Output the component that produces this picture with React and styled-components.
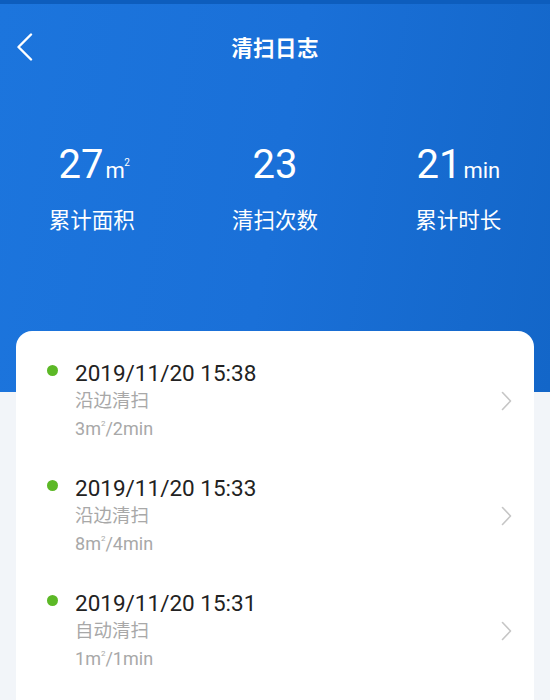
import React from 'react'
import styled, {createGlobalStyle} from 'styled-components'

const GlobalStyle = createGlobalStyle`
  html, body {
    margin: 0;
    padding: 0;
    overflow: hidden;
    background: #f2f5f9;
  }
  body {
    font-family: Roboto, "Noto Sans CJK SC", sans-serif;
  }
`

const STATS = [
  {value: '27', unit: 'm', sup: '2', label: '累计面积'},
  {value: '23', unit: '', label: '清扫次数'},
  {value: '21', unit: 'min', label: '累计时长'}
]

const LOGS = [
  {time: '2019/11/20 15:38', mode: '沿边清扫', area: 3, minutes: 2},
  {time: '2019/11/20 15:33', mode: '沿边清扫', area: 8, minutes: 4},
  {time: '2019/11/20 15:31', mode: '自动清扫', area: 1, minutes: 1}
]

export default function App() {
  return (
    <Page>
      <GlobalStyle />
      <Header>
        <StatusStrip />
        <NavBar>
          <BackButton aria-label="back">
            <svg width="18" height="28" viewBox="0 0 18 28">
              <polyline points="15,1.5 2.5,14 15,26.5" fill="none" stroke="#fff" strokeWidth="2.4" strokeLinecap="round" strokeLinejoin="round" />
            </svg>
          </BackButton>
          <Title>清扫日志</Title>
        </NavBar>
        <Stats>
          {STATS.map(s =>
            <Stat key={s.label}>
              <StatValue>
                {s.value}
                {s.unit && <Unit>{s.unit}{s.sup && <Sup>{s.sup}</Sup>}</Unit>}
              </StatValue>
              <StatLabel>{s.label}</StatLabel>
            </Stat>
          )}
        </Stats>
      </Header>

      <Card>
        {LOGS.map(log =>
          <LogItem key={log.time}>
            <Dot />
            <LogText>
              <LogTime>{log.time}</LogTime>
              <LogMode>{log.mode}</LogMode>
              <LogMeta>{log.area}m<SmallSup>2</SmallSup>/{log.minutes}min</LogMeta>
            </LogText>
            <Chevron width="11" height="20" viewBox="0 0 11 20">
              <polyline points="1.5,1.5 9.5,10 1.5,18.5" fill="none" stroke="#c6c6c6" strokeWidth="1.6" strokeLinecap="round" strokeLinejoin="round" />
            </Chevron>
          </LogItem>
        )}
      </Card>
    </Page>
  )
}

const Page = styled.div`
  width: 550px;
  height: 700px;
  overflow: hidden;
  background: #f2f5f9;
`

const Header = styled.header`
  height: 392px;
  background: linear-gradient(100deg, #1c75dd 0%, #1a70d8 50%, #1366c8 100%);
  color: #fff;
  display: flex;
  flex-direction: column;
`

const StatusStrip = styled.div`
  height: 4px;
  background: #0d5dbd;
`

const NavBar = styled.div`
  height: 84px;
  display: flex;
  align-items: center;
  justify-content: center;
  position: relative;
`

const BackButton = styled.div`
  position: absolute;
  left: 16px;
  top: 29px;
  display: flex;
`

const Title = styled.h1`
  margin: 0;
  font-size: 21.5px;
  font-weight: 700;
  letter-spacing: 0.4px;
`

const Stats = styled.div`
  display: grid;
  grid-template-columns: repeat(3, 1fr);
  margin-top: 52px;
`

const Stat = styled.div`
  display: flex;
  flex-direction: column;
  align-items: center;
`

const StatValue = styled.div`
  font-size: 40px;
  line-height: 50px;
  height: 50px;
  font-weight: 400;
  display: flex;
  align-items: baseline;
`

const Unit = styled.span`
  font-size: 22px;
  line-height: 22px;
  margin-left: 2px;
  position: relative;
`

const Sup = styled.span`
  font-size: 10px;
  line-height: 10px;
  position: absolute;
  top: -2px;
  right: -5px;
`

const StatLabel = styled.div`
  font-size: 21.5px;
  line-height: 30px;
  margin-top: 16px;
`

const Card = styled.section`
  margin: -61px 16px 0;
  min-height: 420px;
  background: #fff;
  border-radius: 16px;
  padding-top: 12px;
`

const LogItem = styled.div`
  display: flex;
  align-items: center;
  padding: 16px 22px 16px 31px;
  height: 83px;
`

const Dot = styled.span`
  width: 11px;
  height: 11px;
  border-radius: 50%;
  background: #5cb826;
  align-self: flex-start;
  margin-top: 6px;
  flex-shrink: 0;
`

const LogText = styled.div`
  flex: 1;
  margin-left: 17px;
  display: flex;
  flex-direction: column;
`

const LogTime = styled.div`
  font-size: 22.5px;
  line-height: 28px;
  color: #222;
`

const LogMode = styled.div`
  font-size: 18.5px;
  line-height: 28px;
  color: #a8a8a8;
`

const LogMeta = styled.div`
  font-size: 18px;
  line-height: 27px;
  color: #a8a8a8;
`

const SmallSup = styled.sup`
  font-size: 8px;
  vertical-align: 9px;
  line-height: 0;
  margin-left: 0;
`

const Chevron = styled.svg`
  flex-shrink: 0;
`
